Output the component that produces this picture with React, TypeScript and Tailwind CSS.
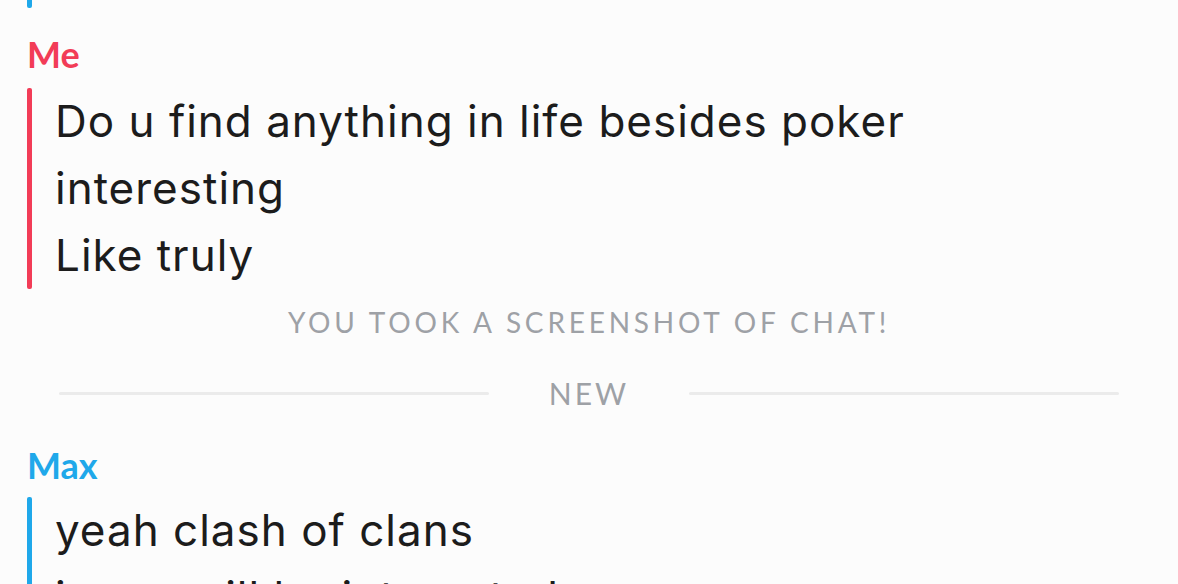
import React from "react";

type BubbleProps = {
  bar: string;
  lines: string[];
  className?: string;
};

// A chat entry: coloured rail on the left, message lines to its right.
function Bubble({ bar, lines, className = "" }: BubbleProps) {
  return (
    <div className={`flex pl-[27px] ${className}`}>
      <div className={`w-[5px] shrink-0 rounded-[2px] ${bar}`} />
      <div className="pl-[23px] font-['Inter',sans-serif] text-[44px] leading-[67px] tracking-[1px] text-[#1c1c1c] whitespace-nowrap [font-variant-ligatures:none]">
        {lines.map((line) => (
          <div key={line}>{line}</div>
        ))}
      </div>
    </div>
  );
}

function Sender({ name, color, className = "" }: { name: string; color: string; className?: string }) {
  return (
    <div className={`pl-[27px] text-[36px] font-bold leading-[36px] ${color} ${className}`}>
      {name}
    </div>
  );
}

export default function App() {
  return (
    <div className="h-[584px] w-full overflow-hidden bg-[#fcfcfc] font-['Lato',sans-serif]">
      <div className="flex flex-col">
        <Bubble bar="bg-[#1fa8ea]" lines={["Mostly"]} className="mt-[-59px]" />

        <Sender name="Me" color="text-[#f23c57]" className="mt-[28px] mb-[16px]" />
        <Bubble
          bar="bg-[#f23c57]"
          lines={["Do u find anything in life besides poker", "interesting", "Like truly"]}
        />

        <div className="mt-[19px] text-center text-[28px] leading-[28px] tracking-[3.8px] text-[#9ea1a6]">
          YOU TOOK A SCREENSHOT OF CHAT!
        </div>

        <div className="mt-[42px] flex items-center px-[59px]">
          <div className="h-[3px] flex-1 rounded-full bg-[#ebebeb]" />
          <div className="mx-[60px] text-[30px] leading-[30px] tracking-[3px] text-[#9ea1a6]">NEW</div>
          <div className="h-[3px] flex-1 rounded-full bg-[#ebebeb]" />
        </div>

        <Sender name="Max" color="text-[#1fa8ea]" className="mt-[39px] mb-[14px]" />
        <Bubble
          bar="bg-[#1fa8ea]"
          lines={["yeah clash of clans", "i sure will be interested"]}
        />
      </div>
    </div>
  );
}
